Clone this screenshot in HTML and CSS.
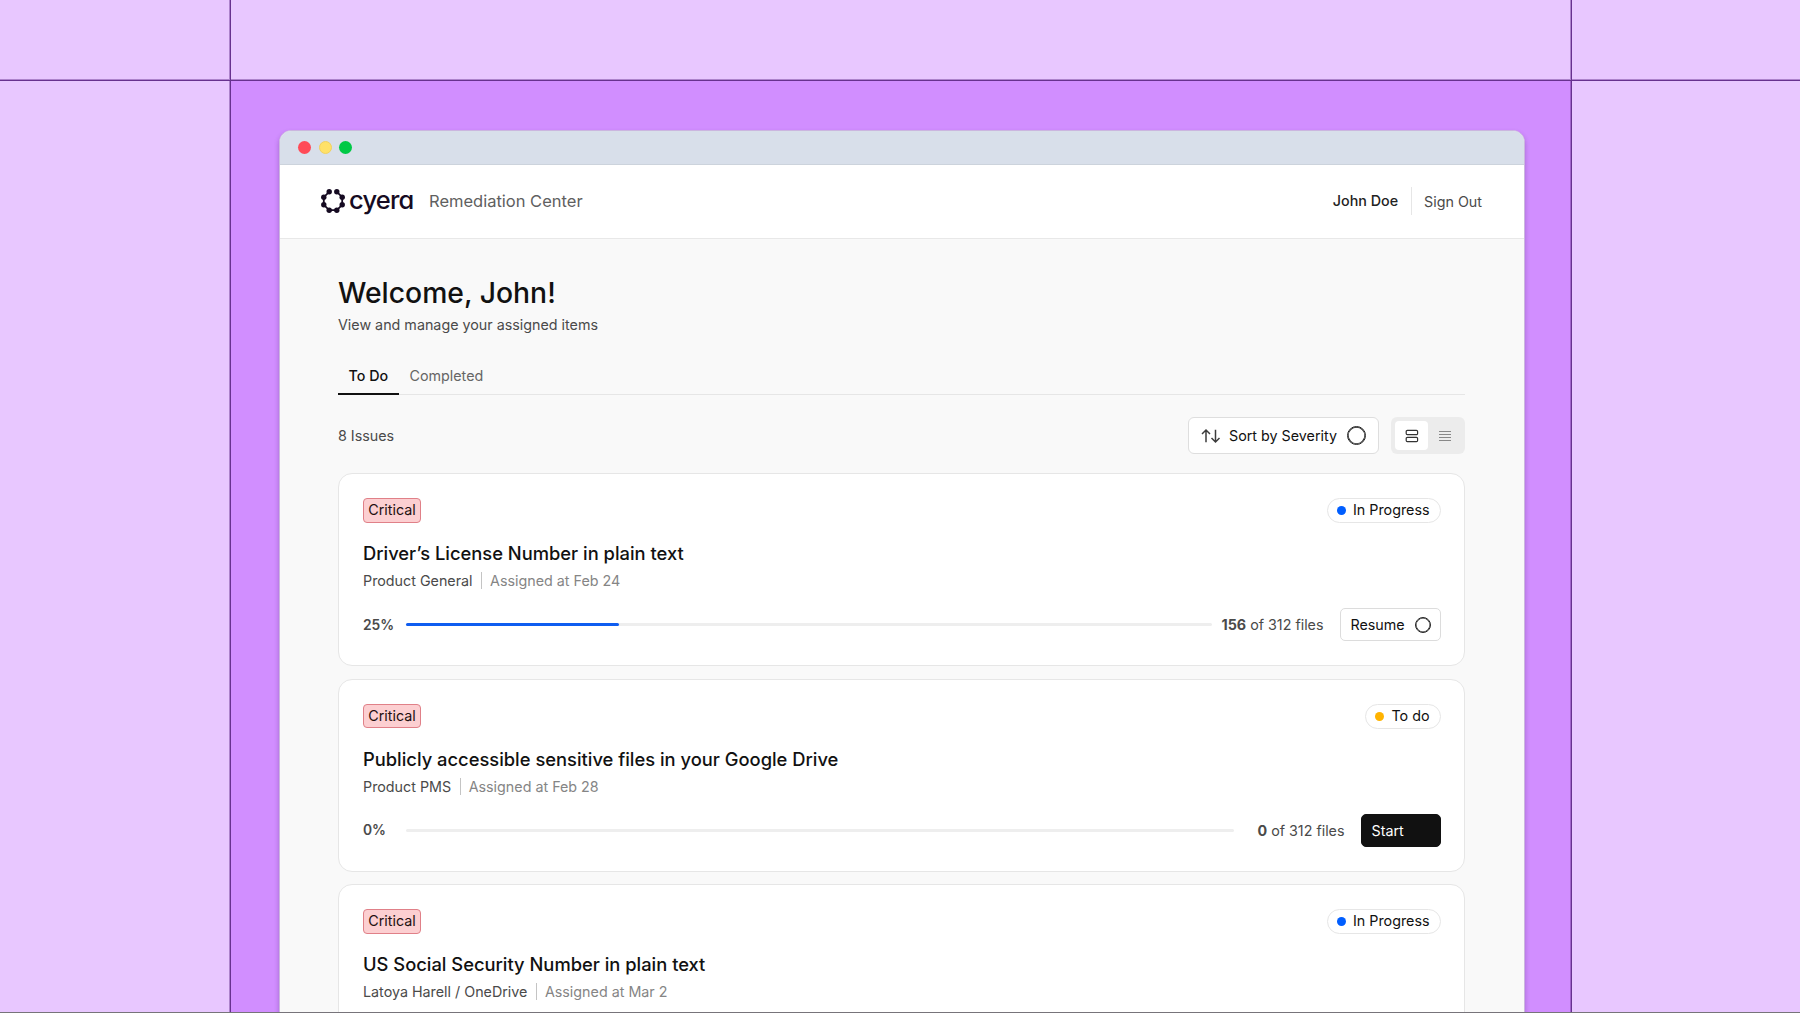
FILE: index.html
```html
<!DOCTYPE html>
<html lang="en">
<head>
  <meta charset="UTF-8" />
  <meta name="viewport" content="width=device-width, initial-scale=1.0"/>
  <title>Cyera Remediation Center</title>
  <link rel="stylesheet" href="styles.css">
</head>
<body>

  <div class="frame">
    <div class="cell top"></div>
    <div class="cell top"></div>
    <div class="cell top last"></div>

    <div class="cell"></div>
    <div class="cell stage">
      <div class="window">
        <div class="titlebar">
          <span class="light red"></span>
          <span class="light yellow"></span>
          <span class="light green"></span>
        </div>

        <header class="header">
          <div class="brand">
            <svg class="logo" viewBox="0 0 24 24" width="24" height="24">
              <path d="M8.2 2.8L2.8 8.2V15.8L8.2 21.2H15.8L21.2 15.8V8.2L15.8 2.8" fill="none" stroke="#160b22" stroke-width="1.8" />
              <g fill="#160b22">
                <circle cx="8.2" cy="2.8" r="2.7" />
                <circle cx="15.8" cy="2.8" r="2.7" />
                <circle cx="21.2" cy="8.2" r="2.7" />
                <circle cx="21.2" cy="15.8" r="2.7" />
                <circle cx="15.8" cy="21.2" r="2.7" />
                <circle cx="8.2" cy="21.2" r="2.7" />
                <circle cx="2.8" cy="15.8" r="2.7" />
                <circle cx="2.8" cy="8.2" r="2.7" />
              </g>
            </svg>
            <span class="wordmark">cyera</span>
            <span class="product">Remediation Center</span>
          </div>
          <div class="account">
            <span class="user">John Doe</span>
            <a class="signout">Sign Out</a>
          </div>
        </header>

        <main class="main">
          <h1>Welcome, John!</h1>
          <p class="intro">View and manage your assigned items</p>

          <nav class="tabs">
            <a class="tab active">To Do</a>
            <a class="tab">Completed</a>
          </nav>

          <div class="toolbar">
            <span class="count">8 Issues</span>
            <button class="sort">
              <svg width="20" height="16" viewBox="0 0 20 16" fill="none" stroke="#3c3c3c" stroke-width="1.5">
                <path d="M5 14.3V2M1 6l4-4 4 4M14.5 1.7V14M10.5 10l4 4 4-4" />
              </svg>
              <span class="sort-text">Sort by Severity</span>
              <span class="ring"></span>
            </button>
            <div class="toggle">
              <span class="view selected">
                <svg width="14" height="14" viewBox="0 0 14 14" fill="none" stroke="#333" stroke-width="1.2">
                  <rect x="1.2" y="1.3" width="11.4" height="4.4" rx="1.2" />
                  <rect x="1.2" y="8.3" width="11.4" height="4.4" rx="1.2" />
                </svg>
              </span>
              <span class="view">
                <svg width="14" height="14" viewBox="0 0 14 14" stroke="#888" stroke-width="1.1">
                  <path d="M1 2.5h12M1 5.5h12M1 8.5h12M1 11.5h12" />
                </svg>
              </span>
            </div>
          </div>

          <section class="card">
            <div class="card-head">
              <span class="severity">Critical</span>
              <span class="status progress">In Progress</span>
            </div>
            <h2>Driver’s License Number in plain text</h2>
            <p class="meta"><span class="source">Product General</span><span class="assigned">Assigned at Feb 24</span></p>
            <div class="card-foot">
              <span class="percent">25%</span>
              <div class="bar"><div class="fill" style="width: 26.4%"></div></div>
              <span class="files"><b>156</b> of 312 files</span>
              <button class="action">Resume <span class="ring small"></span></button>
            </div>
          </section>

          <section class="card">
            <div class="card-head">
              <span class="severity">Critical</span>
              <span class="status todo">To do</span>
            </div>
            <h2>Publicly accessible sensitive files in your Google Drive</h2>
            <p class="meta"><span class="source">Product PMS</span><span class="assigned">Assigned at Feb 28</span></p>
            <div class="card-foot">
              <span class="percent">0%</span>
              <div class="bar"></div>
              <span class="files wide"><b>0</b> of 312 files</span>
              <button class="action dark">Start</button>
            </div>
          </section>

          <section class="card">
            <div class="card-head">
              <span class="severity">Critical</span>
              <span class="status progress">In Progress</span>
            </div>
            <h2>US Social Security Number in plain text</h2>
            <p class="meta"><span class="source">Latoya Harell / OneDrive</span><span class="assigned">Assigned at Mar 2</span></p>
          </section>
        </main>
      </div>
    </div>
    <div class="cell last"></div>
  </div>

</body>
</html>
```

FILE: styles.css
```css
* {
  box-sizing: border-box;
}
body {
  margin: 0;
  height: 100vh;
  overflow: hidden;
  font-family: Inter, sans-serif;
  font-size: 14.3px;
  color: #111;
  border-bottom: 1px solid #77747a;
}
h1, h2, p {
  margin: 0;
  font-weight: 500;
}
button {
  font: inherit;
  color: inherit;
}

/* background grid */
.frame {
  display: grid;
  grid-template-columns: 231px 1341px 1fr;
  grid-template-rows: 81px 1fr;
  height: 1012px;
  overflow: hidden;
  background: #e8c7ff;
}
.cell {
  min-height: 0;
  border-right: 1px solid #67318f;
  box-shadow: inset -1px 0 rgba(103, 49, 143, 0.45);
}
.top {
  border-bottom: 1px solid #67318f;
  box-shadow: inset -1px -1px rgba(103, 49, 143, 0.45);
}
.last {
  border-right: 0;
  box-shadow: none;
}
.top.last {
  box-shadow: inset 0 -1px rgba(103, 49, 143, 0.45);
}
.stage {
  padding: 49px 0 0 48px;
  background: #d18eff;
}

/* browser window */
.window {
  width: 1246px;
  height: 1000px;
  border: 1px solid #cbb6df;
  border-radius: 12px 12px 0 0;
  background: #f9f9f9;
  box-shadow: 0 3px 5px rgba(60, 20, 100, 0.3);
  overflow: hidden;
}
.titlebar {
  display: flex;
  align-items: center;
  gap: 7.5px;
  height: 34px;
  padding-left: 18px;
  background: #d8dfea;
  border-bottom: 1px solid #ccd3dc;
}
.light {
  width: 13px;
  height: 13px;
  border-radius: 50%;
}
.red {
  background: #ff4a57;
}
.yellow {
  background: #ffe168;
  border: 1px solid #f0d060;
}
.green {
  background: #00c946;
}
.header {
  display: flex;
  justify-content: space-between;
  align-items: center;
  height: 74px;
  padding: 0 42px 1px 41px;
  background: #fff;
  border-bottom: 1px solid #e8e8e8;
}
.brand, .account {
  display: flex;
  align-items: center;
}
.wordmark {
  width: 80px;
  margin-left: 4px;
  margin-top: -3px;
  font-size: 25.5px;
  font-weight: 550;
  line-height: 30px;
  letter-spacing: -0.8px;
  color: #160b22;
  font-feature-settings: "cv11";
}
.product {
  margin-top: -1px;
  font-size: 16.5px;
  color: #606060;
}
.user {
  padding-right: 13px;
  border-right: 1px solid #e6e6e6;
  font-weight: 500;
  line-height: 28px;
  color: #222;
}
.signout {
  padding-left: 12px;
  color: #4a4a4a;
}

/* page content */
.main {
  padding: 36px 59px 0 58px;
}
h1 {
  font-size: 28.3px;
  line-height: 36px;
}
.intro {
  margin-top: 4px;
  font-weight: 400;
  line-height: 20px;
  color: #4a4a4a;
}
.tabs {
  display: flex;
  height: 37px;
  margin-top: 23px;
  border-bottom: 1px solid #e6e6e6;
}
.tab {
  height: 37px;
  padding: 0 10.5px;
  line-height: 36px;
  color: #666;
}
.active {
  width: 61px;
  border-bottom: 2px solid #111;
  font-weight: 500;
  color: #111;
  white-space: nowrap;
}
.toolbar {
  display: flex;
  align-items: center;
  height: 37px;
  margin: 22px 0 19px;
}
.count {
  margin-right: auto;
  color: #4a4a4a;
}
.sort {
  display: flex;
  align-items: center;
  width: 191px;
  height: 37px;
  padding: 0 12px;
  border: 1px solid #dedede;
  border-radius: 6px;
  background: #fff;
}
.sort-text {
  margin: 0 auto 0 8px;
}
.ring {
  width: 19px;
  height: 19px;
  border: 1px solid #222;
  border-radius: 50%;
  box-shadow: inset 0 0 0 0.7px #222;
}
.small {
  width: 16px;
  height: 16px;
  box-shadow: inset 0 0 0 0.5px #222;
}
.toggle {
  display: flex;
  width: 74px;
  height: 37px;
  margin-left: 12px;
  padding: 4px;
  border-radius: 6px;
  background: #ececec;
}
.view {
  display: flex;
  flex: 1;
  align-items: center;
  justify-content: center;
  border-radius: 4px;
}
.selected {
  background: #fff;
}

/* issue cards */
.card {
  height: 193px;
  margin-bottom: 12.5px;
  padding: 24px 23.5px 0 24px;
  border: 1px solid #e6e6e6;
  border-radius: 14px;
  background: #fff;
}
.card-head {
  display: flex;
  justify-content: space-between;
  height: 25px;
}
.severity {
  width: 58px;
  height: 24.5px;
  border: 1px solid #e08088;
  border-radius: 4px;
  background: #fccfd1;
  line-height: 22px;
  text-align: center;
  color: #230f10;
}
.status {
  display: flex;
  align-items: center;
  padding: 0 10px 2px 9.5px;
  border: 1px solid #e6e6e6;
  border-radius: 13px;
}
.status::before {
  content: "";
  width: 9px;
  height: 9px;
  margin-right: 7px;
  margin-top: 2px;
  border-radius: 50%;
}
.progress::before {
  background: #005eff;
}
.todo::before {
  background: #ffb300;
}
h2 {
  margin-top: 18px;
  font-size: 18.33px;
  line-height: 24px;
}
.meta {
  display: flex;
  margin-top: 7px;
  line-height: 17px;
  font-weight: 400;
}
.source {
  padding-right: 8.5px;
  border-right: 1px solid #c4c4c4;
  color: #4a4a4a;
}
.assigned {
  padding-left: 8px;
  color: #858585;
}
.card-foot {
  display: flex;
  align-items: center;
  height: 33px;
  margin-top: 19px;
  color: #4a4a4a;
}
.percent {
  width: 43px;
  font-size: 13.8px;
  font-weight: 600;
}
.bar {
  flex: 1;
  height: 3px;
  border-radius: 2px;
  background: #eee;
}
.fill {
  height: 3px;
  border-radius: 2px;
  background: #0f5df0;
}
.files {
  width: 104px;
  margin: 0 16px 0 8px;
  text-align: right;
  white-space: nowrap;
}
.wide {
  width: 103px;
}
.files b {
  font-weight: 700;
}
.action {
  display: flex;
  align-items: center;
  justify-content: space-between;
  width: 101px;
  height: 33px;
  padding: 0 9px 0 10px;
  border: 1px solid #dcdcdc;
  border-radius: 5px;
  background: #fff;
  color: #111;
}
.dark {
  width: 80px;
  border-color: #111;
  background: #111;
  color: #fff;
}
```
